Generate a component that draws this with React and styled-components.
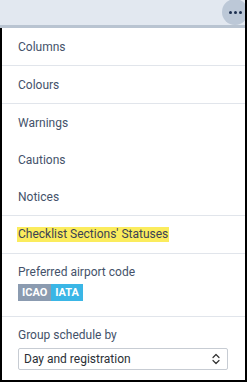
import React from "react";
import styled, { createGlobalStyle } from "styled-components";

const Global = createGlobalStyle`
  html, body { margin: 0; padding: 0; background: #fff; }
  body { font-family: Roboto, "Liberation Sans", Arial, sans-serif; }
  * { box-sizing: border-box; }
`;

const Frame = styled.div`
  width: 247px;
  height: 382px;
  border-right: 2px solid #000;
  display: flex;
  flex-direction: column;
  overflow: hidden;
`;

const Header = styled.div`
  height: 28px;
  flex: none;
  background: #e2e8f0;
  border-bottom: 3px solid #b9c4d1;
  position: relative;
`;

const MoreButton = styled.button`
  position: absolute;
  top: -1px;
  right: -3px;
  width: 26px;
  height: 26px;
  border-radius: 50%;
  border: none;
  padding: 0;
  background: #bcc8d7;
  display: flex;
  align-items: center;
  justify-content: center;
  gap: 2px;
`;

const Dot = styled.span`
  width: 3px;
  height: 3px;
  border-radius: 50%;
  background: #1c2f4f;
`;

const Panel = styled.div`
  flex: 1;
  border-left: 2px solid #000;
  border-bottom: 2px solid #000;
  display: flex;
  flex-direction: column;
`;

const Group = styled.div`
  display: flex;
  flex-direction: column;
  border-bottom: 1px solid #e1e5eb;
`;

const Item = styled.div`
  height: 37px;
  display: flex;
  align-items: center;
  padding: 0 16px;
  font-size: 12px;
  color: #44526a;
`;

const Highlight = styled.span`
  background: #fbec5d;
  color: #3b4252;
  margin-left: -1px;
  padding: 0 1px;
  line-height: 15px;
`;

const Section = styled.div`
  display: flex;
  flex-direction: column;
  align-items: flex-start;
  padding: ${(p) => p.$pad};
  border-bottom: ${(p) => (p.$last ? "none" : "1px solid #e1e5eb")};
`;

const Label = styled.div`
  font-size: 12px;
  line-height: 16px;
  color: #44526a;
`;

const Toggle = styled.div`
  display: flex;
  margin-top: 4px;
`;

const ToggleBtn = styled.span`
  height: 17px;
  display: flex;
  align-items: center;
  padding: 0 ${(p) => p.$px}px;
  font-size: 11px;
  font-weight: 700;
  color: #fff;
  background: ${(p) => (p.$active ? "#3ab6e6" : "#8b9bb0")};
`;

const Select = styled.div`
  margin-top: 5px;
  width: 210px;
  height: 22px;
  border: 1px solid #c7ccd3;
  border-radius: 2px;
  display: flex;
  align-items: center;
  justify-content: space-between;
  padding: 0 7px 0 5px;
  font-size: 12px;
  color: #2b2f36;
`;

const Chevrons = () => (
  <svg width="8" height="12" viewBox="0 0 8 12" fill="none" stroke="#333" strokeWidth="1.2" strokeLinecap="round" strokeLinejoin="round">
    <path d="M1 4.5 L4 1.5 L7 4.5" />
    <path d="M1 7.5 L4 10.5 L7 7.5" />
  </svg>
);

export default function App() {
  return (
    <>
      <Global />
      <Frame>
        <Header>
          <MoreButton aria-label="More">
            <Dot />
            <Dot />
            <Dot />
          </MoreButton>
        </Header>
        <Panel>
          <Group>
            <Item>Columns</Item>
          </Group>
          <Group>
            <Item>Colours</Item>
          </Group>
          <Group>
            <Item>Warnings</Item>
            <Item>Cautions</Item>
            <Item>Notices</Item>
          </Group>
          <Group>
            <Item>
              <Highlight>Checklist Sections' Statuses</Highlight>
            </Item>
          </Group>
          <Section $pad="10px 16px 15px">
            <Label>Preferred airport code</Label>
            <Toggle>
              <ToggleBtn $px={4}>ICAO</ToggleBtn>
              <ToggleBtn $px={4} $active>IATA</ToggleBtn>
            </Toggle>
          </Section>
          <Section $pad="10px 16px 8px" $last>
            <Label>Group schedule by</Label>
            <Select>
              <span>Day and registration</span>
              <Chevrons />
            </Select>
          </Section>
        </Panel>
      </Frame>
    </>
  );
}
